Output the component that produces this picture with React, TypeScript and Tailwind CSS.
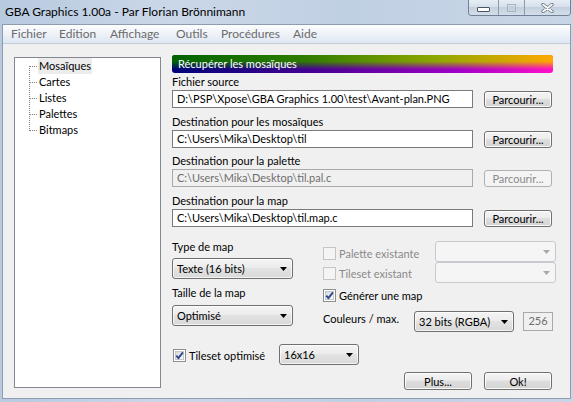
import React from "react";

function Btn({ label, disabled = false, cls = "" }: { label: string; disabled?: boolean; cls?: string }) {
  const st = disabled
    ? "border-[#adb2b5] bg-[#f4f4f4] text-[#8a8a8a]"
    : "border-[#707070] bg-[linear-gradient(to_bottom,#f4f4f4_0%,#ececec_45%,#dedede_50%,#d3d3d3_100%)] shadow-[inset_0_0_0_1px_rgba(255,255,255,0.85)] text-black";
  return (
    <div className={`flex items-center justify-center rounded-[3px] border text-[11px] leading-none ${st} ${cls}`}>
      {label}
    </div>
  );
}

function Arrow({ color }: { color: string }) {
  return (
    <svg width="7" height="4" viewBox="0 0 7 4" className="block">
      <polygon points="0,0 7,0 3.5,4" fill={color} />
    </svg>
  );
}

function Combo({ text, cls = "", disabled = false }: { text: string; cls?: string; disabled?: boolean }) {
  const st = disabled
    ? "border-[#c6c9cd] bg-[#f5f5f5]"
    : "border-[#707070] bg-[linear-gradient(to_bottom,#f4f4f4_0%,#ececec_45%,#e2e2e2_50%,#d9d9d9_100%)] shadow-[inset_0_0_0_1px_rgba(255,255,255,0.7)]";
  return (
    <div className={`flex items-center rounded-[3px] border h-[21px] ${st} ${cls}`}>
      <span className="flex-1 pl-[4px] leading-none whitespace-nowrap">{text}</span>
      <span className="pr-[5px]">
        <Arrow color={disabled ? "#a9a9a9" : "#000000"} />
      </span>
    </div>
  );
}

function Check({ checked = false, disabled = false }: { checked?: boolean; disabled?: boolean }) {
  return (
    <div
      className={`w-[13px] h-[13px] shrink-0 border p-[1px] ${
        disabled ? "border-[#c5c5c5] bg-[#f4f4f4]" : "border-[#8e8f8f] bg-white"
      }`}
    >
      <div
        className={`w-[9px] h-[9px] relative ${
          disabled
            ? "bg-[#f4f4f4]"
            : "border border-[#c4c9d0] bg-[linear-gradient(135deg,#d7dbe1_0%,#f8f8f8_100%)]"
        }`}
      >
        {checked && (
          <svg width="11" height="11" viewBox="0 0 11 11" className="absolute left-[-2px] top-[-2px]">
            <path d="M2.3 5.6 L4.4 8.2 L8.9 2.4" fill="none" stroke="#34478a" strokeWidth="1.9" strokeLinejoin="round" />
          </svg>
        )}
      </div>
    </div>
  );
}

function Field({
  label,
  value,
  disabled = false,
  cls = "",
}: {
  label: string;
  value: string;
  disabled?: boolean;
  cls?: string;
}) {
  return (
    <div className={cls}>
      <div className="h-[16px] leading-[16px] whitespace-nowrap">{label}</div>
      <div className="flex items-start">
        <div
          className={`w-[301px] h-[18px] border flex items-center pl-[4px] whitespace-nowrap overflow-hidden ${
            disabled ? "border-[#a9a9a9] bg-[#f0f0f0] text-[#6d6d6d]" : "border-[#7a7a7a] bg-white"
          }`}
        >
          {value}
        </div>
        <Btn label="Parcourir..." disabled={disabled} cls="ml-[11px] mt-[1px] w-[68px] h-[17px]" />
      </div>
    </div>
  );
}

const menu: [string, string][] = [
  ["Fichier", "w-[48px]"],
  ["Edition", "w-[51px]"],
  ["Affichage", "w-[66px]"],
  ["Outils", "w-[45px]"],
  ["Procédures", "w-[72px]"],
  ["Aide", "w-[40px]"],
];

const treeItems = ["Mosaïques", "Cartes", "Listes", "Palettes", "Bitmaps"];

export default function App() {
  return (
    <div className="w-[573px] h-[402px] overflow-hidden flex flex-col font-['Lato',sans-serif] text-[12px] text-black bg-[linear-gradient(to_right,#b8cae0_0%,#cad7e8_30%,#c0d0e3_60%,#c8d5e6_100%)]">
      {/* Title bar */}
      <div className="h-[24px] shrink-0 flex items-start">
        <div className="pl-[5px] pt-[4px] leading-[16px] whitespace-nowrap">GBA Graphics 1.00a - Par Florian Brönnimann</div>
        <div className="ml-auto mr-[2px] flex h-[16px] border border-t-0 border-[#6f8097] rounded-b-[4px] overflow-hidden">
          <div className="w-[29px] flex items-center justify-center bg-[linear-gradient(to_bottom,#e6edf5_0%,#d6e0eb_45%,#c4d0de_50%,#d4dee9_100%)]">
            <svg width="13" height="5" viewBox="0 0 13 5" className="mt-[3px]">
              <rect x="0.5" y="0.5" width="12" height="4" rx="0.5" fill="#ffffff" stroke="#4a5566" />
            </svg>
          </div>
          <div className="w-[26px] border-l border-[#8a99ad] flex items-center justify-center bg-[linear-gradient(to_bottom,#e6edf5_0%,#d6e0eb_45%,#c4d0de_50%,#d4dee9_100%)]">
            <svg width="9" height="8" viewBox="0 0 9 8">
              <rect x="0.5" y="0.5" width="8" height="7" fill="none" stroke="#a8b3c2" />
              <rect x="2.5" y="2.5" width="4" height="3" fill="none" stroke="#c5cdd8" />
            </svg>
          </div>
          <div className="w-[46px] border-l border-[#8a99ad] flex items-center justify-center bg-[linear-gradient(to_bottom,#e6edf5_0%,#d6e0eb_45%,#c4d0de_50%,#d4dee9_100%)]">
            <svg width="13" height="10" viewBox="0 0 13 10">
              <path d="M2 1.5 L11 8.5 M11 1.5 L2 8.5" stroke="#6a7789" strokeWidth="3.4" strokeLinecap="round" />
              <path d="M2 1.5 L11 8.5 M11 1.5 L2 8.5" stroke="#ffffff" strokeWidth="1.6" strokeLinecap="round" />
            </svg>
          </div>
        </div>
      </div>

      {/* Window body */}
      <div className="flex-1 min-h-0 flex pl-[2px] pr-[2px] pb-[3px]">
        <div className="flex-1 flex flex-col border border-[#8e9cb0] bg-[#f0f0f0] min-h-0">
          {/* Menu bar */}
          <div className="h-[19px] shrink-0 flex items-center pl-[8px] border-b border-[#c3cedd] bg-[linear-gradient(to_bottom,#fcfdfe_0%,#eef2f8_50%,#dfe7f2_100%)] text-[#6b6b6b]">
            {menu.map(([t, w]) => (
              <div key={t} className={`${w} leading-[18px] whitespace-nowrap`}>
                {t}
              </div>
            ))}
          </div>

          {/* Client */}
          <div className="flex-1 flex items-start text-[11px]">
            {/* Tree */}
            <div className="ml-[11px] mt-[13px] w-[147px] h-[331px] border border-[#828790] bg-white shrink-0">
              <div className="flex">
                <svg width="23" height="80" viewBox="0 0 23 80" className="shrink-0" shapeRendering="crispEdges">
                  <line x1="14.5" y1="8" x2="14.5" y2="73" stroke="#808080" strokeDasharray="1 1" />
                  {[0, 1, 2, 3, 4].map((i) => (
                    <line key={i} x1="15" y1={8.5 + i * 16} x2="23" y2={8.5 + i * 16} stroke="#808080" strokeDasharray="1 1" />
                  ))}
                </svg>
                <div className="flex flex-col">
                  {treeItems.map((t, i) => (
                    <div
                      key={t}
                      className={`h-[16px] leading-[16px] px-[1px] whitespace-nowrap ${i === 0 ? "bg-[#ececec]" : ""}`}
                    >
                      {t}
                    </div>
                  ))}
                </div>
              </div>
            </div>

            {/* Right panel */}
            <div className="ml-[11px] mt-[11px] w-[381px] flex flex-col shrink-0">
              <div className="relative h-[18px] rounded-[3px] overflow-hidden bg-[linear-gradient(to_right,#000078_0%,#4c0096_40%,#a000c8_75%,#ff10c8_100%)]">
                <div className="absolute inset-0 bg-[linear-gradient(to_right,#006400_0%,#2f7c00_35%,#90a800_70%,#ffa800_100%)] [mask-image:linear-gradient(to_bottom,black_0%,black_35%,transparent_80%)]" />
                <div className="relative pl-[6px] leading-[18px] text-white whitespace-nowrap">Récupérer les mosaïques</div>
              </div>

              <Field cls="mt-[1px]" label="Fichier source" value="D:\PSP\Xpose\GBA Graphics 1.00\test\Avant-plan.PNG" />
              <Field cls="mt-[6px]" label="Destination pour les mosaïques" value="C:\Users\Mika\Desktop\til" />
              <Field cls="mt-[5px]" label="Destination pour la palette" value="C:\Users\Mika\Desktop\til.pal.c" disabled />
              <Field cls="mt-[6px]" label="Destination pour la map" value="C:\Users\Mika\Desktop\til.map.c" />

              {/* Lower options */}
              <div className="flex items-start">
                <div className="w-[121px] flex flex-col shrink-0">
                  <div className="mt-[12px] h-[16px] leading-[16px]">Type de map</div>
                  <Combo text="Texte (16 bits)" cls="mt-[3px] w-[121px]" />
                  <div className="mt-[6px] h-[16px] leading-[16px]">Taille de la map</div>
                  <Combo text="Optimisé" cls="mt-[4px] w-[121px]" />
                </div>
                <div className="ml-[30px] w-[233px] flex flex-col shrink-0">
                  <div className="mt-[14px] h-[21px] flex items-start">
                    <div className="w-[112px] mt-[6px] flex items-center text-[#8a8a8a]">
                      <Check disabled />
                      <span className="ml-[3px] leading-[13px] whitespace-nowrap">Palette existante</span>
                    </div>
                    <Combo text="" disabled cls="w-[121px]" />
                  </div>
                  <div className="h-[21px] flex items-start">
                    <div className="w-[112px] mt-[5px] flex items-center text-[#8a8a8a]">
                      <Check disabled />
                      <span className="ml-[3px] leading-[13px] whitespace-nowrap">Tileset existant</span>
                    </div>
                    <Combo text="" disabled cls="w-[121px]" />
                  </div>
                  <div className="mt-[6px] h-[13px] flex items-center">
                    <Check checked />
                    <span className="ml-[3px] leading-[13px] whitespace-nowrap">Générer une map</span>
                  </div>
                  <div className="mt-[9px] flex items-start">
                    <div className="w-[91px] h-[16px] leading-[16px] whitespace-nowrap">Couleurs / max.</div>
                    <Combo text="32 bits (RGBA)" cls="w-[100px]" />
                    <div className="ml-[9px] mt-[1px] w-[30px] h-[19px] border border-[#a9a9a9] bg-[#f0f0f0] text-[#6d6d6d] flex items-center justify-center">
                      256
                    </div>
                  </div>
                </div>
              </div>

              {/* Tileset optimisé row */}
              <div className="mt-[12px] flex items-start">
                <div className="ml-[1px] w-[106px] mt-[5px] flex items-center">
                  <Check checked />
                  <span className="ml-[3px] leading-[13px] whitespace-nowrap">Tileset optimisé</span>
                </div>
                <Combo text="16x16" cls="w-[80px]" />
              </div>

              {/* Buttons */}
              <div className="mt-[7px] flex justify-end pr-[1px]">
                <Btn label="Plus..." cls="w-[68px] h-[18px]" />
                <Btn label="Ok!" cls="ml-[12px] w-[68px] h-[18px]" />
              </div>
            </div>
          </div>
        </div>
      </div>
    </div>
  );
}
